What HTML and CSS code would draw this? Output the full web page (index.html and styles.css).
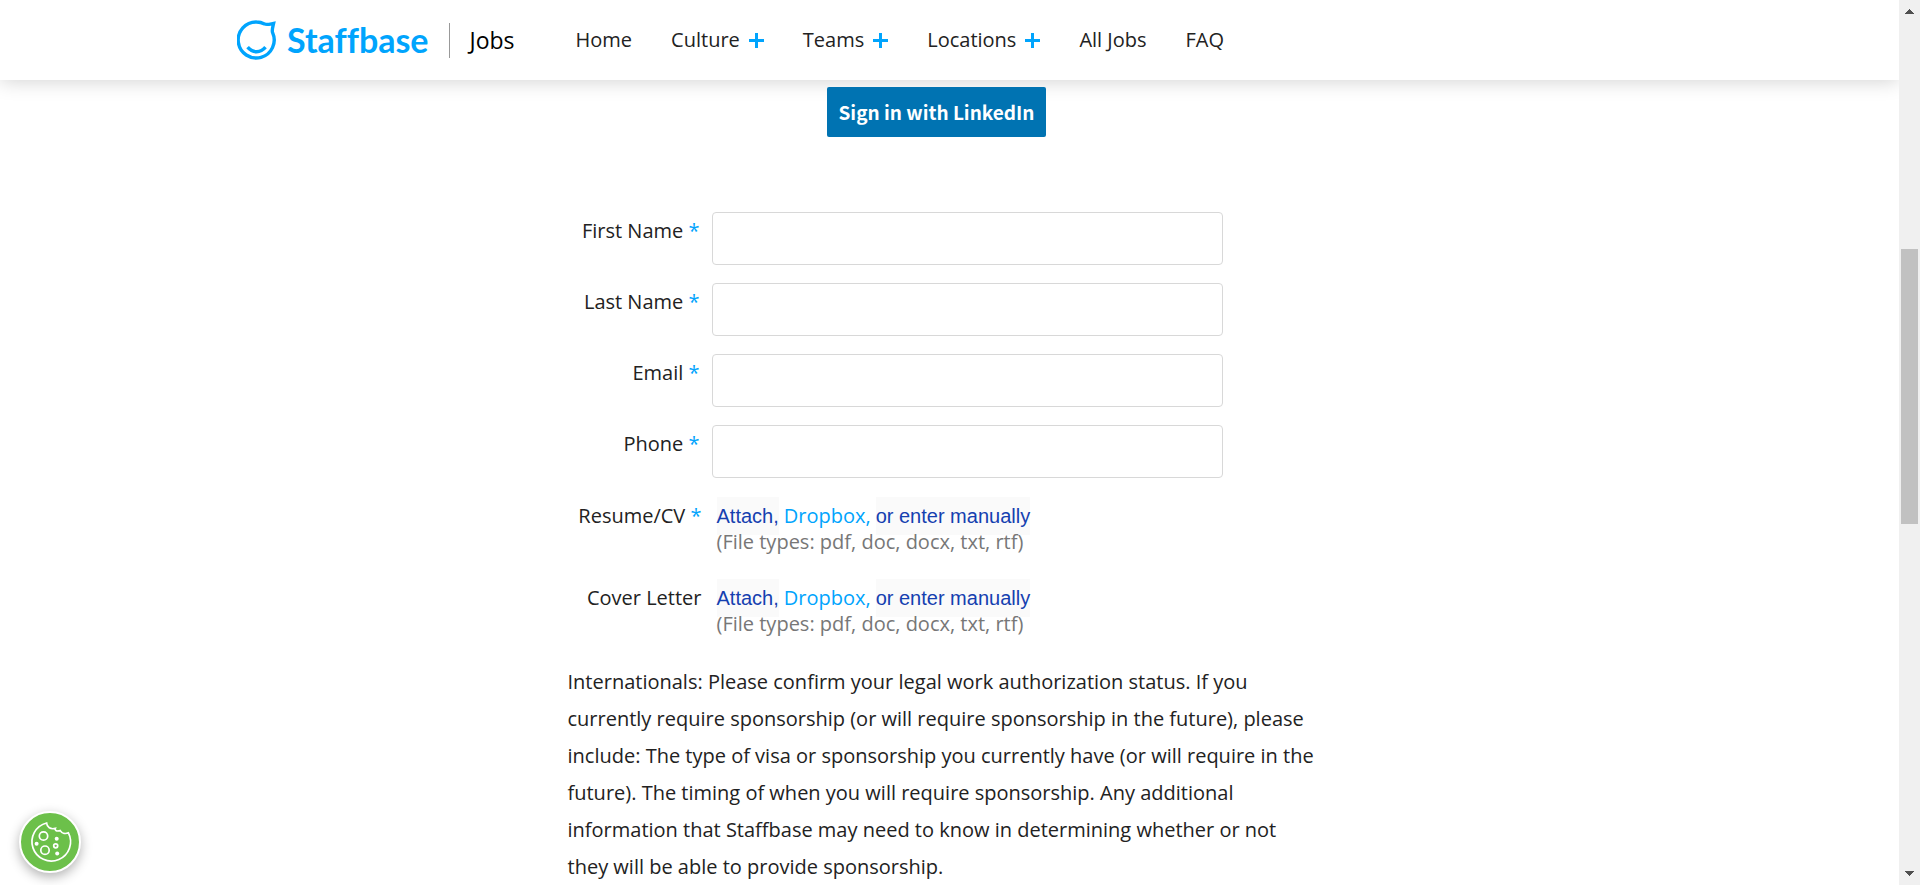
FILE: index.html
```html
<!DOCTYPE html>
<html lang="en">
<head>
<meta charset="utf-8">
<title>Staffbase Jobs</title>
<link rel="stylesheet" href="styles.css">
</head>
<body>
<div class="window">
  <div class="page">
    <header class="header">
      <a class="brand" href="#">
        <svg class="brand-icon" viewBox="0 0 40 40" aria-hidden="true"><path d="M27.5 3.9C24.9 2.6 22.5 2 19.6 2A18 18 0 1 0 35.6 12.6C34.6 10.5 35.8 7 36.6 3.4C33.2 4 29.6 5.2 27.5 3.9Z"/><path d="M10.6 27.2C15.5 33.2 23.6 33.2 28.5 27.2"/></svg>
        <span class="brand-name">Staffbase</span>
      </a>
      <a class="section" href="#">Jobs</a>
      <nav class="nav">
        <a href="#">Home</a>
        <a class="more" href="#">Culture</a>
        <a class="more" href="#">Teams</a>
        <a class="more" href="#">Locations</a>
        <a href="#">All Jobs</a>
        <a href="#">FAQ</a>
      </nav>
    </header>
    <main class="content">
      <form class="form">
        <button class="linkedin" type="button">Sign in with LinkedIn</button>
        <div class="fields">
          <div class="field"><label for="first">First Name <span class="req">*</span></label><input id="first" type="text"></div>
          <div class="field"><label for="last">Last Name <span class="req">*</span></label><input id="last" type="text"></div>
          <div class="field"><label for="email">Email <span class="req">*</span></label><input id="email" type="email"></div>
          <div class="field"><label for="phone">Phone <span class="req">*</span></label><input id="phone" type="tel"></div>
        </div>
        <div class="upload" role="group" aria-labelledby="resume">
          <span class="upload-label" id="resume">Resume/CV <span class="req">*</span></span>
          <div>
            <div class="sources"><button type="button">Attach,</button><a href="#">Dropbox,</a><button type="button">or enter manually</button></div>
            <div class="types">(File types: pdf, doc, docx, txt, rtf)</div>
          </div>
        </div>
        <div class="upload" role="group" aria-labelledby="cover">
          <span class="upload-label" id="cover">Cover Letter</span>
          <div>
            <div class="sources"><button type="button">Attach,</button><a href="#">Dropbox,</a><button type="button">or enter manually</button></div>
            <div class="types">(File types: pdf, doc, docx, txt, rtf)</div>
          </div>
        </div>
        <p class="question">Internationals: Please confirm your legal work authorization status. If you currently require sponsorship (or will require sponsorship in the future), please include: The type of visa or sponsorship you currently have (or will require in the future). The timing of when you will require sponsorship. Any additional information that Staffbase may need to know in determining whether or not they will be able to provide sponsorship.</p>
      </form>
    </main>
  </div>
  <div class="scrollbar" aria-hidden="true">
    <svg viewBox="0 0 9 5"><path d="M0 5V4H1V3H2V2H3V1H4V0H5V1H6V2H7V3H8V4H9V5Z"/></svg>
    <div class="track"><div class="thumb"></div></div>
    <svg viewBox="0 0 9 5"><path d="M0 0V1H1V2H2V3H3V4H4V5H5V4H6V3H7V2H8V1H9V0Z"/></svg>
  </div>
  <button class="cookies" type="button" aria-label="Cookie settings">
    <svg viewBox="0 0 40 40" aria-hidden="true">
      <path d="M16.6 1A19.3 19.3 0 1 0 38.4 10.8C35.8 12 32.2 11.8 30.2 8.6C26 9.8 24.6 8 25.3 6.4C20.5 7.6 17 5.4 16.6 1Z"/>
      <circle cx="13.5" cy="14" r="4.2"/><circle cx="15" cy="28.2" r="4.2"/><circle cx="25.7" cy="23.8" r="2"/>
      <g class="chips"><circle cx="6.6" cy="21.8" r="2"/><circle cx="26.7" cy="16.8" r="2"/><circle cx="27.2" cy="31.6" r="2"/></g>
    </svg>
  </button>
</div>
</body>
</html>
```
FILE: styles.css
```css
* { box-sizing: border-box; }

body {
  margin: 0;
  background: #fff;
  color: #222;
  font: 400 20px/26px "Open Sans", "Noto Sans", sans-serif;
}

a { color: inherit; text-decoration: none; }

button { border: 0; cursor: pointer; }

.window {
  display: grid;
  grid-template-columns: minmax(0, 1fr) 21px;
  height: 100vh;
  overflow: hidden;
}

.page { overflow: hidden; }

.header {
  display: flex;
  align-items: center;
  height: 80px;
  padding: 0 237px;
  background: #fff;
  box-shadow: 0 0 20px rgba(0, 0, 0, 0.2);
}

.brand {
  display: flex;
  align-items: center;
  gap: 10px;
  color: #00a4fd;
}

.brand-icon {
  width: 40px;
  height: 40px;
  fill: none;
  stroke: currentColor;
  stroke-width: 3.4;
}

.brand-name { font: 700 34px/40px Lato, sans-serif; font-variant-ligatures: none; }

.section {
  margin-left: 20px;
  padding-left: 20px;
  border-left: 1px solid #999;
  color: #000;
  font-size: 23px;
  font-weight: 500;
  line-height: 35px;
}

.nav {
  display: flex;
  gap: 39px;
  margin-left: 61px;
  white-space: nowrap;
}

.more {
  display: flex;
  align-items: center;
  gap: 9px;
}

.more::after {
  content: "";
  width: 15px;
  height: 15px;
  background:
    linear-gradient(#00a4fd, #00a4fd) center / 15px 3px no-repeat,
    linear-gradient(#00a4fd, #00a4fd) center / 3px 15px no-repeat;
}

.content {
  display: flex;
  justify-content: center;
  padding-top: 7px;
}

.form { width: 764px; }

.linkedin {
  display: block;
  height: 50px;
  margin-left: 259px;
  padding: 0 12px;
  border-radius: 2px;
  background: #0073b2;
  color: #fff;
  font: 700 19px/26px "Noto Sans CJK SC", sans-serif;
}

.fields {
  display: grid;
  gap: 18px;
  margin: 75px 0 19px;
}

.field {
  display: grid;
  grid-template-columns: 132px 511px;
  column-gap: 12px;
}

.field label { padding-top: 6px; text-align: right; }

.field input {
  height: 53px;
  padding: 0 12px;
  border: 1px solid #d8d8d8;
  border-radius: 4px;
  background: #fff;
  font: inherit;
}

.req { color: #00a4fd; }

.upload {
  display: grid;
  grid-template-columns: 134px 1fr;
  column-gap: 15px;
  margin-bottom: 24px;
}

.upload-label { padding-top: 6px; text-align: right; }

.sources {
  display: flex;
  align-items: center;
  gap: 5px;
  height: 38px;
}

.sources button {
  height: 38px;
  padding: 0;
  background: #fafafa;
  color: #1540b0;
  font: 20px/26px "Liberation Sans", Arial, sans-serif;
}

.sources a { color: #00a4fd; }

.types { margin-top: -6px; color: #777; }

.question { max-width: 754px; margin: 26px 0 0; line-height: 37px; }

.scrollbar {
  display: flex;
  flex-direction: column;
  align-items: center;
  padding: 9px 0;
  background: #f0f0f0;
}

.scrollbar svg { width: 9px; height: 5px; fill: #505050; }

.track {
  flex: 1;
  width: 17px;
  padding-top: 235px;
}

.thumb { height: 275px; background: #c1c1c1; }

.cookies {
  position: fixed;
  left: 19px;
  bottom: 12px;
  display: grid;
  place-items: center;
  width: 62px;
  height: 62px;
  padding: 0;
  border: 2px solid #fff;
  border-radius: 50%;
  background: #6cc04a;
  box-shadow: 0 4px 12px rgba(0, 0, 0, 0.3);
}

.cookies svg {
  width: 40px;
  height: 40px;
  overflow: visible;
  fill: none;
  stroke: #fff;
  stroke-width: 1.7;
}

.cookies .chips { fill: #fff; stroke: none; }
```
